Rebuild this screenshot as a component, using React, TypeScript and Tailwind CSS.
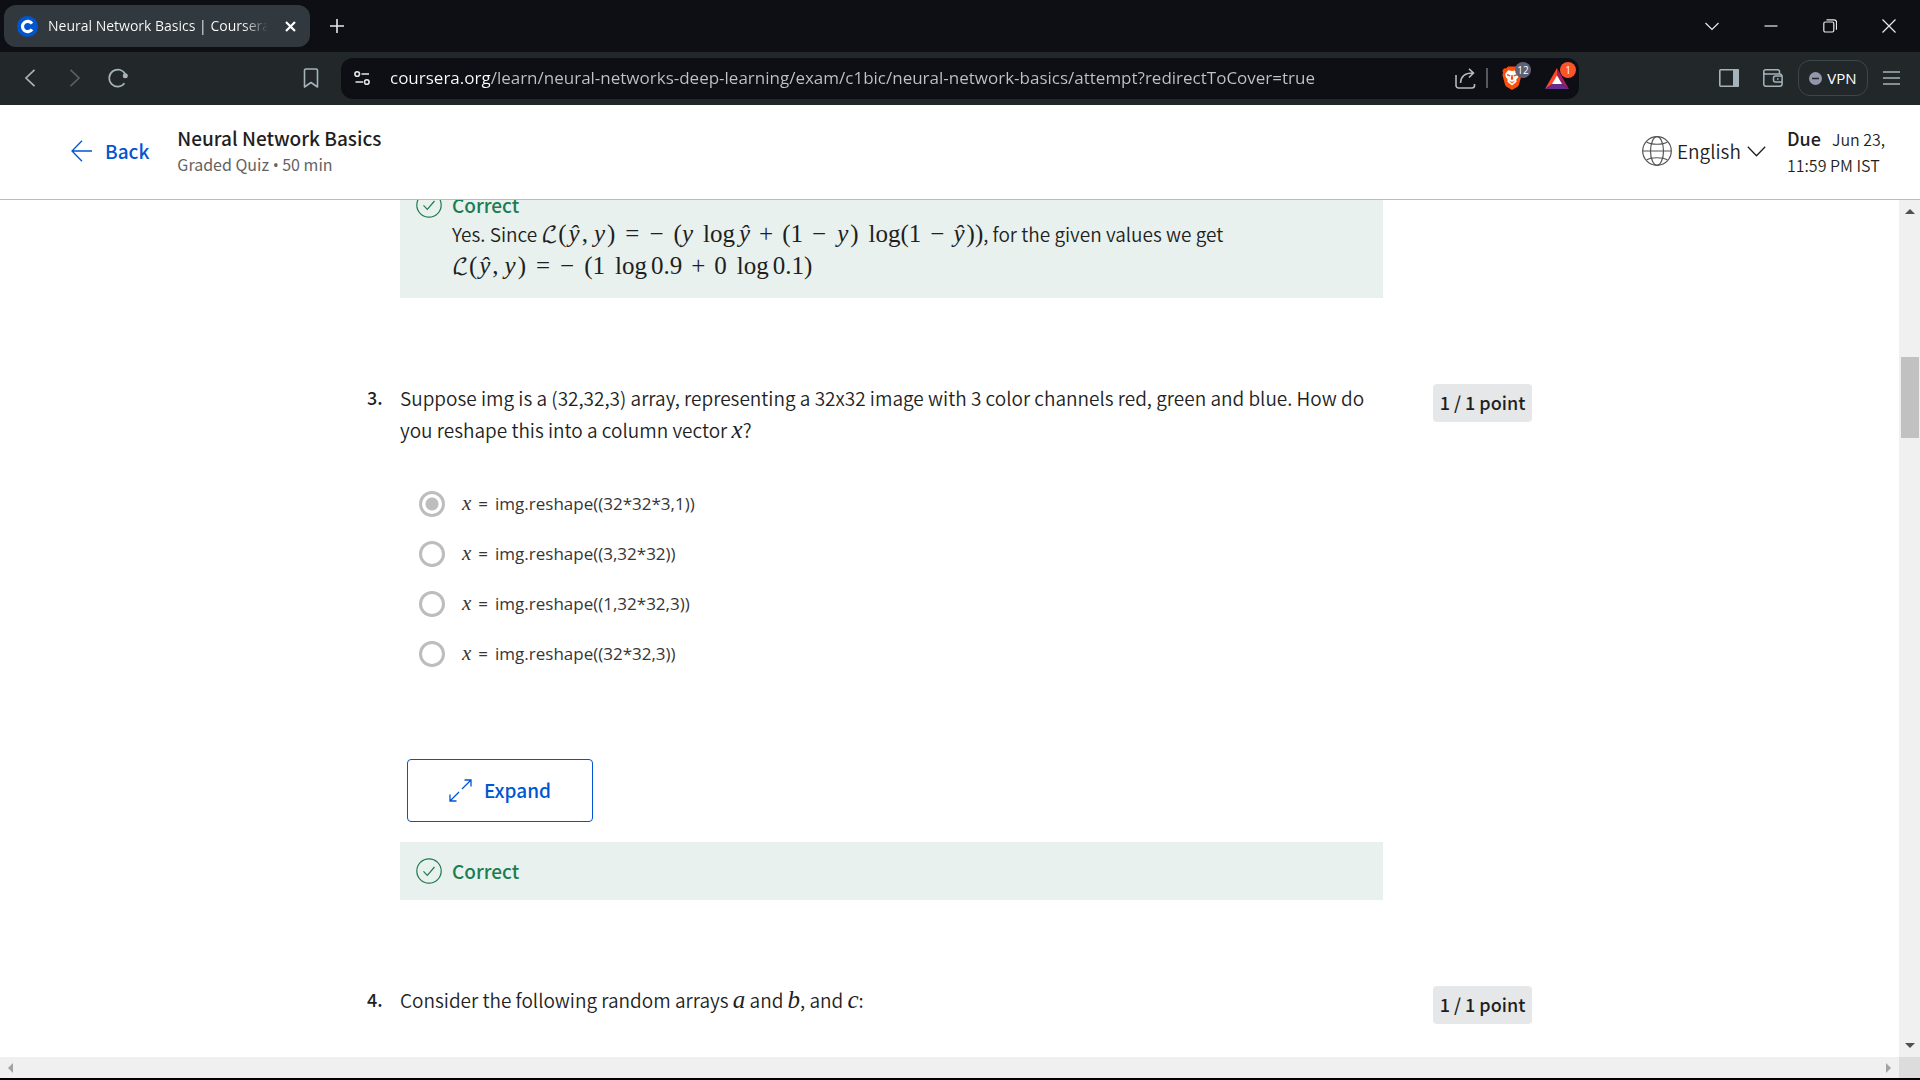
import type { ReactNode } from "react";

const SOURCE = "font-['Noto_Sans_CJK_SC',sans-serif]";
const SYSTEM = "font-['Open_Sans','Noto_Sans',sans-serif]";

const URL_TEXT =
  "coursera.org/learn/neural-networks-deep-learning/exam/c1bic/neural-network-basics/attempt?redirectToCover=true";

/* ---------- browser chrome ---------- */

function TabStrip() {
  return (
    <div className={`flex h-[52px] shrink-0 items-center bg-[#0d0f14] pl-1 text-white ${SYSTEM}`}>
      <div className="flex h-[42px] w-[306px] items-center rounded-xl bg-[#31393e] pl-[13px] pr-2">
        <svg className="size-[21px] shrink-0" viewBox="0 0 21 21" aria-hidden="true">
          <circle cx="10.5" cy="10.5" r="10.5" fill="#0056d2" />
          <path d="M15 7.6A5.2 5.2 0 1 0 15 13.4" fill="none" stroke="#fff" strokeWidth="3.2" />
        </svg>
        <span className="ml-[10px] w-[225px] overflow-hidden bg-[linear-gradient(to_right,#fff_195px,transparent_220px)] bg-clip-text text-sm leading-6 whitespace-nowrap text-transparent">
          Neural Network Basics | Coursera
        </span>
        <button type="button" aria-label="Close tab" className="ml-2 flex size-6 items-center justify-center">
          <svg className="size-[11px]" viewBox="0 0 11 11" stroke="#fff" strokeWidth="2.2" aria-hidden="true">
            <path d="M1 1l9 9M10 1l-9 9" />
          </svg>
        </button>
      </div>
      <button type="button" aria-label="New tab" className="ml-[15px] flex size-6 items-center justify-center">
        <svg className="size-[14px]" viewBox="0 0 14 14" stroke="#e6e8ea" strokeWidth="1.6" aria-hidden="true">
          <path d="M7 0v14M0 7h14" />
        </svg>
      </button>
      <div className="ml-auto flex items-center pr-0.5">
        <WindowButton label="Search tabs">
          <path d="M.5 4L7 10.500L13.500 4" />
        </WindowButton>
        <WindowButton label="Minimize">
          <path d="M.5 7h13" />
        </WindowButton>
        <WindowButton label="Restore">
          <rect x="0.8" y="3" width="10" height="10" rx="1.5" />
          <path d="M3.500 .8h7.500a2.500 2.500 0 0 1 2.500 2.500v7.500" />
        </WindowButton>
        <WindowButton label="Close window">
          <path d="M.5 .5l13 13M13.500 .5l-13 13" />
        </WindowButton>
      </div>
    </div>
  );
}

function WindowButton({ label, children }: { label: string; children: ReactNode }) {
  return (
    <button type="button" aria-label={label} className="flex h-8 w-[59px] items-center justify-center">
      <svg className="size-[14px]" viewBox="0 0 14 14" fill="none" stroke="#e8eaec" strokeWidth="1.2" aria-hidden="true">
        {children}
      </svg>
    </button>
  );
}

function AddressBar() {
  return (
    <div className="flex h-[41px] w-[1238px] items-center rounded-xl bg-[#0d0f14] pl-[13px] pr-2">
      <button type="button" aria-label="Site information" className="shrink-0">
        <svg className="size-4" viewBox="0 0 16 16" fill="none" stroke="#e4e6e8" strokeWidth="1.600" aria-hidden="true">
          <circle cx="3.200" cy="4" r="2.300" />
          <path d="M7.500 4h7.500M1.500 12h7.500" />
          <circle cx="12.800" cy="12" r="2.300" />
        </svg>
      </button>
      <input
        type="text"
        aria-label="Address"
        defaultValue={URL_TEXT}
        className="ml-5 h-8 min-w-0 flex-1 bg-[linear-gradient(to_right,#fff_100px,#c1c3c5_100px)] bg-clip-text pb-0.5 text-[17px] text-transparent outline-none"
      />
      <button type="button" aria-label="Share" className="shrink-0">
        <svg className="size-[21px]" viewBox="0 0 21 21" fill="none" stroke="#b4b9bd" strokeWidth="1.600" aria-hidden="true">
          <path d="M1 7v10.500a2.500 2.500 0 0 0 2.500 2.500h13.500a2.500 2.500 0 0 0 2.500-2.500v-1.500" />
          <path d="M5.500 15c.3-6 4-10 12-10M14 .8l4.500 4.200L14 9.500" />
        </svg>
      </button>
      <span className="ml-[10px] h-5 w-0.5 shrink-0 bg-[#55595e]" />
      <button type="button" aria-label="Shields, 12 blocked" className="relative ml-[14px] shrink-0">
        <svg className="h-6 w-5" viewBox="0 0 20 24" aria-hidden="true">
          <path d="M6 .5h8l2 2 2-.2 1.600 2.700-.7 1.800.7 2.200-2.600 9.500c-.4 1.400-1.200 2-2.300 2.800L10 24l-4.700-2.700C4.200 20.500 3.400 19.900 3 18.500L.4 9l.7-2.200L.4 5 2 2.300l2 .2z" fill="#fb4f0b" />
          <path d="M6.200 4.300L10 5l3.800-.7 3 3.600-.6 3.200-2 2.600.4 2.100L10 19.500l-4.600-3.700.4-2.100-2-2.600-.6-3.200z" fill="#fff" />
          <path d="M5 8l3.600 1.200-.6 1.300-3-1zM15 8l-3.600 1.200.6 1.300 3-1zM9.300 9h1.400l.6 4.200L10 14l-1.300-.8zM6.800 14.500l3.200 1.600 3.200-1.600-3.200 3z" fill="#fb4f0b" />
        </svg>
        <span className="absolute -top-1 left-[13px] flex size-4 items-center justify-center rounded-full bg-[#5e6175] text-[10px] leading-none text-white">
          12
        </span>
      </button>
      <button type="button" aria-label="Rewards, 1 new" className="relative ml-[23px] mr-[2px] shrink-0">
        <svg className="h-[21px] w-6" viewBox="0 0 24 21" aria-hidden="true">
          <path d="M12 0L0 21l12-8z" fill="#ff4724" />
          <path d="M12 0l12 21-12-8z" fill="#9e1f63" />
          <path d="M0 21h24l-12-8z" fill="#662d91" />
          <path d="M12 7.500l5 8.500H7z" fill="#fff" />
        </svg>
        <span className="absolute -top-1.5 left-[15px] flex size-4 items-center justify-center rounded-full bg-[#fb542b] text-[10px] leading-none text-white">
          1
        </span>
      </button>
    </div>
  );
}

function Toolbar() {
  return (
    <div className={`flex h-[53px] shrink-0 items-center bg-[#22272a] pb-px pl-6 text-white ${SYSTEM}`}>
      <button type="button" aria-label="Go back">
        <svg className="h-[18px] w-3" viewBox="0 0 12 18" fill="none" stroke="#a5b4bb" strokeWidth="1.700" aria-hidden="true">
          <path d="M10.500 .8L2 9l8.500 8.200" />
        </svg>
      </button>
      <button type="button" aria-label="Go forward" className="ml-[33px]">
        <svg className="h-[18px] w-3" viewBox="0 0 12 18" fill="none" stroke="#566065" strokeWidth="1.700" aria-hidden="true">
          <path d="M1.500 .8L10 9l-8.500 8.200" />
        </svg>
      </button>
      <button type="button" aria-label="Reload" className="ml-[27px]">
        <svg className="size-5" viewBox="0 0 20 20" fill="none" stroke="#a5b4bb" strokeWidth="1.700" aria-hidden="true">
          <path d="M17.200 6A8.500 8.500 0 1 0 16.500 15.200" />
          <circle cx="17.300" cy="7.800" r="2.500" fill="#a5b4bb" stroke="none" />
        </svg>
      </button>
      <button type="button" aria-label="Bookmark" className="ml-[175px]">
        <svg className="h-5 w-4" viewBox="0 0 16 20" fill="none" stroke="#a5b4bb" strokeWidth="1.600" strokeLinejoin="round" aria-hidden="true">
          <path d="M1.500 19V2.500A1.500 1.500 0 0 1 3 1h10a1.500 1.500 0 0 1 1.500 1.500V19L8 14.500z" />
        </svg>
      </button>
      <div className="ml-[22px]">
        <AddressBar />
      </div>
      <div className="ml-auto flex items-center pr-5">
        <button type="button" aria-label="Sidebar">
          <svg className="h-[18px] w-5" viewBox="0 0 20 18" aria-hidden="true">
            <rect x="0.800" y="0.800" width="18.400" height="16.400" rx="1" fill="none" stroke="#a5b4bb" strokeWidth="1.600" />
            <rect x="14" y="0" width="6" height="18" rx="1" fill="#a5b4bb" />
          </svg>
        </button>
        <button type="button" aria-label="Wallet" className="ml-6">
          <svg className="h-[18px] w-5" viewBox="0 0 20 18" fill="none" stroke="#a5b4bb" strokeWidth="1.500" aria-hidden="true">
            <path d="M16.500 5V2.500A1.700 1.700 0 0 0 14.800 .8H2.500A1.700 1.700 0 0 0 .8 2.500v12.700A2 2 0 0 0 2.800 17.200h14a2.300 2.300 0 0 0 2.300-2.200V7A2.300 2.300 0 0 0 17 5H2.500A1.700 1.700 0 0 1 .8 3" />
            <path d="M19 7h-6.500a2 2 0 0 0-2 2v2a2 2 0 0 0 2 2H19" />
            <path d="M14 10h1.500" />
          </svg>
        </button>
        <button
          type="button"
          className="ml-[15px] flex h-9 w-[70px] items-center justify-center gap-[5px] rounded-xl border border-[#3d464b] text-[15px]"
        >
          <svg className="size-[13px]" viewBox="0 0 13 13" aria-hidden="true">
            <circle cx="6.500" cy="6.500" r="6.500" fill="#9496ab" />
            <path d="M3 6.500h7" stroke="#22272a" strokeWidth="1.500" />
          </svg>
          VPN
        </button>
        <button type="button" aria-label="Menu" className="ml-[15px]">
          <svg className="h-[14px] w-[17px]" viewBox="0 0 17 14" stroke="#a5b4bb" strokeWidth="1.500" aria-hidden="true">
            <path d="M0 1h17M0 7h17M0 13h17" />
          </svg>
        </button>
      </div>
    </div>
  );
}

/* ---------- page header ---------- */

function PageHeader() {
  return (
    <header className="flex h-[95px] shrink-0 items-center border-b border-[#bbb] bg-white pr-[31px] pb-0.5 pl-[71px] text-[#1f1f1f]">
      <a href="#back" className="flex items-center gap-[13px] text-[19px] leading-7 font-medium text-[#0056d2]">
        <svg className="h-[22px] w-[21px]" viewBox="0 0 21 22" fill="none" stroke="#0056d2" strokeWidth="1.300" aria-hidden="true">
          <path d="M21 11H1M11 .8L1 11l10 10.200" />
        </svg>
        Back
      </a>
      <div className="ml-7">
        <h1 className="text-[19px] leading-[26px] font-medium">Neural Network Basics</h1>
        <p className="text-base leading-[26px] text-[#636363]">
          Graded Quiz <span className={SYSTEM}>•</span> 50 min
        </p>
      </div>
      <div className="ml-auto flex items-center">
        <svg className="size-[30px]" viewBox="0 0 30 30" fill="none" stroke="#555" strokeWidth="1.200" aria-hidden="true">
          <circle cx="15" cy="15" r="14.300" />
          <ellipse cx="15" cy="15" rx="6.500" ry="14.300" />
          <path d="M.7 15h28.600M4.500 6c5 3 16 3 21 0M4.500 24c5-3 16-3 21 0" />
        </svg>
        <label className="ml-[5px] flex items-center">
          <span className="sr-only">Language</span>
          <select className="w-[70px] appearance-none bg-transparent text-[19px] leading-7 font-[350] outline-none" defaultValue="English">
            <option>English</option>
          </select>
          <svg className="h-[11px] w-[19px]" viewBox="0 0 19 11" fill="none" stroke="#1f1f1f" strokeWidth="1.300" aria-hidden="true">
            <path d="M.8 .8l8.700 9 8.700-9" />
          </svg>
        </label>
        <p className="ml-[21px] w-[102px] text-base leading-[26px] font-[350]">
          <span className="mr-[11px] text-[18px] font-medium">Due</span>Jun 23, 11:59 PM IST
        </p>
      </div>
    </header>
  );
}

/* ---------- maths ---------- */

function M({ children }: { children: ReactNode }) {
  return <span className="font-['Liberation_Serif',serif] text-[25px] leading-none font-normal whitespace-nowrap text-[#1f1f1f]">{children}</span>;
}

function Rel({ children }: { children: ReactNode }) {
  return <span className="mx-2.5">{children}</span>;
}

function Bin({ children }: { children: ReactNode }) {
  return <span className="mx-[9px]">{children}</span>;
}

function Log() {
  return <span className="ml-2.5">log</span>;
}

function Loss() {
  return (
    <>
      <span className="font-['DejaVu_Math_TeX_Gyre','DejaVu_Serif',serif] text-[22px] leading-none">ℒ</span>(
      <i className="mx-0.5">ŷ</i>,<i className="mr-0.5 ml-1.5">y</i>)
    </>
  );
}

/* ---------- quiz ---------- */

function Feedback({ children }: { children?: ReactNode }) {
  return (
    <div className="flex gap-[10px] bg-[#e8f1ee] py-4 pr-4 pl-4">
      <svg className="size-[26px] shrink-0" viewBox="0 0 26 26" fill="none" stroke="#1d7c50" strokeWidth="1.200" aria-hidden="true">
        <circle cx="13" cy="13" r="12.200" />
        <path d="M7.500 13.300l3.800 4L18.500 9" />
      </svg>
      <div>
        <p className="text-[19px] leading-[26px] font-medium text-[#1d7c50]">Correct</p>
        {children}
      </div>
    </div>
  );
}

function Question({ number, prompt, children }: { number: number; prompt: ReactNode; children?: ReactNode }) {
  return (
    <section className="mt-[84px] flex items-start">
      <span className="w-[33px] shrink-0 text-[18px] leading-[30px] font-medium">{number}.</span>
      <div className="min-w-0 flex-1">
        <div className="pr-4 text-[19px] leading-8 font-[350]">{prompt}</div>
        {children}
      </div>
      <span className="mt-0.5 ml-[50px] flex h-[38px] w-[99px] shrink-0 items-center justify-center rounded bg-[#e5e7e8] pb-0.5 text-[18px] font-medium">
        1 / 1 point
      </span>
    </section>
  );
}

const OPTIONS = [
  "img.reshape((32*32*3,1))",
  "img.reshape((3,32*32))",
  "img.reshape((1,32*32,3))",
  "img.reshape((32*32,3))",
];

function Options() {
  return (
    <fieldset className="mt-[33px] pl-[19px]">
      <legend className="sr-only">Answer</legend>
      {OPTIONS.map((text, i) => (
        <label key={text} className={`flex h-[50px] items-center text-[17px] leading-6 font-normal text-[#363636] ${SYSTEM}`}>
          <input
            type="radio"
            name="reshape"
            defaultChecked={i === 0}
            className="size-[26px] shrink-0 appearance-none rounded-full border-[3px] border-[#bdbdbd] bg-white checked:bg-[radial-gradient(circle,#bdbdbd_6px,transparent_7px)]"
          />
          <span className="ml-[17px]">
            <i className="font-['Liberation_Serif',serif] text-[21px] leading-none">x</i>
            <span className="mx-[7px]">=</span>
            {text}
          </span>
        </label>
      ))}
    </fieldset>
  );
}

function Quiz() {
  return (
    <main className="min-w-0 flex-1 overflow-hidden bg-white text-[#1f1f1f]">
      <div className="mx-auto -mt-6 w-full max-w-[1165px]">
        <div className="mr-[149px] ml-[33px]">
          <Feedback>
            <p className="text-[19px] leading-8 font-[350]">
              Yes. Since{" "}
              <M>
                <Loss />
                <Rel>=</Rel>
                <span className="mr-2.5">−</span>(<i>y</i>
                <Log />
                <i className="ml-1">ŷ</i>
                <Bin>+</Bin>(1<Bin>−</Bin>
                <i className="mx-0.5">y</i>)<Log />(1<Bin>−</Bin>
                <i className="mr-0.5">ŷ</i>))
              </M>
              , for the given values we get
            </p>
            <p className="text-[19px] leading-8 font-[350]">
              <M>
                <Loss />
                <Rel>=</Rel>
                <span className="mr-2.5">−</span>(1
                <Log />
                <span className="ml-1">0.9</span>
                <Bin>+</Bin>0<Log />
                <span className="ml-1">0.1</span>)
              </M>
            </p>
          </Feedback>
        </div>

        <Question
          number={3}
          prompt={
            <>
              Suppose img is a (32,32,3) array, representing a 32x32 image with 3 color channels red, green and blue.
              How do you reshape this into a column vector <M><i>x</i></M>?
            </>
          }
        >
          <Options />
          <button
            type="button"
            className="mt-[80px] ml-[7px] flex h-[63px] w-[186px] items-center justify-center gap-3 rounded border border-[#0056d2] text-[19px] font-medium text-[#0056d2]"
          >
            <svg className="size-[23px]" viewBox="0 0 23 23" fill="none" stroke="#0056d2" strokeWidth="1.300" aria-hidden="true">
              <path d="M15.500 1H22v6.500M22 1l-9 9M1 15.500V22h6.500M1 22l9-9" />
            </svg>
            Expand
          </button>
          <div className="mt-5">
            <Feedback />
          </div>
        </Question>

        <Question
          number={4}
          prompt={
            <>
              Consider the following random arrays <M><i>a</i></M> and <M><i>b</i></M>, and <M><i>c</i></M>:
            </>
          }
        />
      </div>
    </main>
  );
}

/* ---------- scrollbars ---------- */

function VerticalScrollbar() {
  return (
    <div className="flex w-[21px] shrink-0 flex-col items-center bg-[#f0f0f0] py-[9px]">
      <svg className="h-[5px] w-[10px]" viewBox="0 0 10 5" aria-hidden="true">
        <path d="M0 5L5 0l5 5z" fill="#505050" />
      </svg>
      <div className="mt-[143px] h-[81px] w-[18px] bg-[#c1c1c1]" />
      <svg className="mt-auto h-[5px] w-[10px]" viewBox="0 0 10 5" aria-hidden="true">
        <path d="M0 0l5 5 5-5z" fill="#505050" />
      </svg>
    </div>
  );
}

function HorizontalScrollbar() {
  return (
    <div className="flex h-[21px] shrink-0 bg-[#f0f0f0]">
      <div className="flex flex-1 items-center justify-between px-2">
        <svg className="h-[10px] w-[5px]" viewBox="0 0 5 10" aria-hidden="true">
          <path d="M5 0L0 5l5 5z" fill="#a3a3a3" />
        </svg>
        <svg className="h-[10px] w-[5px]" viewBox="0 0 5 10" aria-hidden="true">
          <path d="M0 0l5 5-5 5z" fill="#a3a3a3" />
        </svg>
      </div>
      <div className="w-[21px] bg-[#dcdcdc]" />
    </div>
  );
}

export default function App() {
  return (
    <div className={`flex h-screen flex-col overflow-hidden border-b-2 border-black bg-white ${SOURCE}`}>
      <TabStrip />
      <Toolbar />
      <PageHeader />
      <div className="flex min-h-0 flex-1">
        <Quiz />
        <VerticalScrollbar />
      </div>
      <HorizontalScrollbar />
    </div>
  );
}
